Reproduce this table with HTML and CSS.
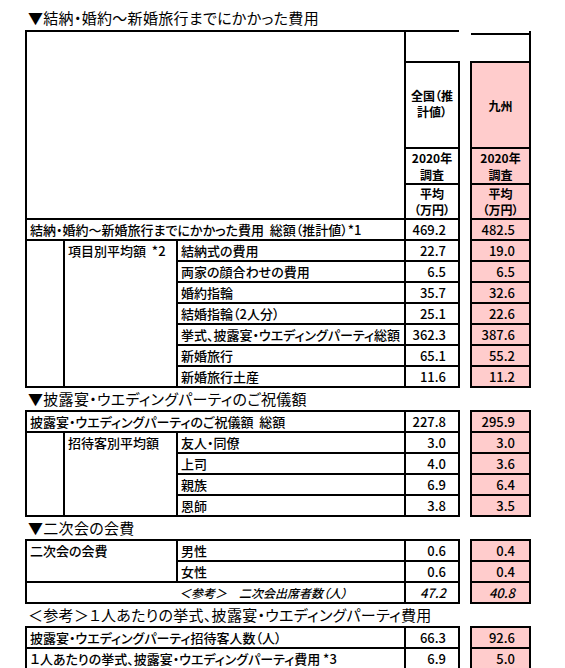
FILE: index.html
```html
<!DOCTYPE html>
<html lang="ja">
<head>
<meta charset="utf-8">
<title>費用</title>
<link rel="stylesheet" href="styles.css">
</head>
<body>
<div class="sheet">
  <h2 class="title first">▼結納・婚約～新婚旅行までにかかった費用</h2>
  <table class="grid">
    <colgroup><col class="c1"><col class="c2"><col class="c3"><col class="cn"><col class="cs"><col class="cp"></colgroup>
    <tr class="h1">
      <td colspan="3" rowspan="4" class="blank"></td>
      <td class="num-top"></td>
      <td rowspan="4" class="sp"></td>
      <td class="pink-top"><div class="cap"></div></td>
    </tr>
    <tr class="h2">
      <td class="hd nat">全国（推<br>計値）</td>
      <td class="hd pink kyu">九州</td>
    </tr>
    <tr class="h3">
      <td class="hd">2020年<br>調査</td>
      <td class="hd pink">2020年<br>調査</td>
    </tr>
    <tr class="h4">
      <td class="hd avg">平均<br>（万円）</td>
      <td class="hd avg pink">平均<br>（万円）</td>
    </tr>
    <tr class="r">
      <td colspan="3">結納・婚約～新婚旅行までにかかった費用&nbsp;&nbsp;総額（推計値）*1</td>
      <td class="n">469.2</td><td class="sp"></td><td class="n pink">482.5</td>
    </tr>
    <tr class="r">
      <td rowspan="7"></td>
      <td rowspan="7" class="top">項目別平均額&nbsp;&nbsp;*2</td>
      <td>結納式の費用</td>
      <td class="n">22.7</td><td class="sp"></td><td class="n pink">19.0</td>
    </tr>
    <tr class="r"><td>両家の顔合わせの費用</td><td class="n">6.5</td><td class="sp"></td><td class="n pink">6.5</td></tr>
    <tr class="r"><td>婚約指輪</td><td class="n">35.7</td><td class="sp"></td><td class="n pink">32.6</td></tr>
    <tr class="r"><td>結婚指輪（2人分）</td><td class="n">25.1</td><td class="sp"></td><td class="n pink">22.6</td></tr>
    <tr class="r"><td>挙式、披露宴・ウエディングパーティ総額</td><td class="n">362.3</td><td class="sp"></td><td class="n pink">387.6</td></tr>
    <tr class="r"><td>新婚旅行</td><td class="n">65.1</td><td class="sp"></td><td class="n pink">55.2</td></tr>
    <tr class="r"><td>新婚旅行土産</td><td class="n">11.6</td><td class="sp"></td><td class="n pink">11.2</td></tr>
  </table>

  <h2 class="title">▼披露宴・ウエディングパーティのご祝儀額</h2>
  <table class="grid">
    <colgroup><col class="c1"><col class="c2"><col class="c3"><col class="cn"><col class="cs"><col class="cp"></colgroup>
    <tr class="r">
      <td colspan="3">披露宴・ウエディングパーティのご祝儀額&nbsp;&nbsp;総額</td>
      <td class="n">227.8</td><td class="sp"></td><td class="n pink">295.9</td>
    </tr>
    <tr class="r">
      <td rowspan="4"></td>
      <td rowspan="4" class="top">招待客別平均額</td>
      <td>友人・同僚</td>
      <td class="n">3.0</td><td class="sp"></td><td class="n pink">3.0</td>
    </tr>
    <tr class="r"><td>上司</td><td class="n">4.0</td><td class="sp"></td><td class="n pink">3.6</td></tr>
    <tr class="r"><td>親族</td><td class="n">6.9</td><td class="sp"></td><td class="n pink">6.4</td></tr>
    <tr class="r"><td>恩師</td><td class="n">3.8</td><td class="sp"></td><td class="n pink">3.5</td></tr>
  </table>

  <h2 class="title">▼二次会の会費</h2>
  <table class="grid">
    <colgroup><col class="c1"><col class="c2"><col class="c3"><col class="cn"><col class="cs"><col class="cp"></colgroup>
    <tr class="r">
      <td colspan="2" rowspan="2" class="top">二次会の会費</td>
      <td>男性</td>
      <td class="n">0.6</td><td class="sp"></td><td class="n pink">0.4</td>
    </tr>
    <tr class="r"><td>女性</td><td class="n">0.6</td><td class="sp"></td><td class="n pink">0.4</td></tr>
    <tr class="r">
      <td colspan="3" class="ref">＜参考＞　二次会出席者数（人）</td>
      <td class="n it">47.2</td><td class="sp"></td><td class="n pink it">40.8</td>
    </tr>
  </table>

  <h2 class="title">＜参考＞１人あたりの挙式、披露宴・ウエディングパーティ費用</h2>
  <table class="grid">
    <colgroup><col class="c1"><col class="c2"><col class="c3"><col class="cn"><col class="cs"><col class="cp"></colgroup>
    <tr class="r">
      <td colspan="3">披露宴・ウエディングパーティ招待客人数（人）</td>
      <td class="n">66.3</td><td class="sp"></td><td class="n pink">92.6</td>
    </tr>
    <tr class="r">
      <td colspan="3">１人あたりの挙式、披露宴・ウエディングパーティ費用 *3</td>
      <td class="n">6.9</td><td class="sp"></td><td class="n pink">5.0</td>
    </tr>
  </table>
</div>
</body>
</html>
```

FILE: styles.css
```css
* { box-sizing: border-box; }
html, body { margin: 0; padding: 0; background: #fff; }
body {
  font-family: "Noto Sans CJK JP", "Noto Sans", sans-serif;
  color: #000;
  font-weight: 500;
  font-feature-settings: "palt";
}
.sheet { padding-left: 25px; width: 565px; }
.title {
  margin: 0;
  font-size: 15px;
  font-weight: 400;
  letter-spacing: 0.3px;
  height: 22px;
  line-height: 22px;
  padding-left: 3px;
  white-space: nowrap;
}
.title.first { height: 30px; line-height: 24px; padding-top: 6px; }

.grid {
  border-collapse: collapse;
  table-layout: fixed;
  width: 505px;
  font-size: 13px;
}
col.c1 { width: 38px; }
col.c2 { width: 113px; }
col.c3 { width: 228px; }
col.cn { width: 54px; }
col.cs { width: 12px; }
col.cp { width: 59px; }

.grid td {
  border: 2px solid #000;
  padding: 0 3px;
  vertical-align: middle;
  white-space: nowrap;
  line-height: 16px;
  overflow: hidden;
}
.grid td.sp { border: none; padding: 0; }
.grid tr.r { height: 21px; }
.grid tr.h1 { height: 31px; }
.grid tr.h2 { height: 86px; }
.grid tr.h3 { height: 35px; }
.grid tr.h4 { height: 34px; }

.grid td.num-top { border-right: none; }
.grid td.pink-top {
  border-left: none;
  border-top: none;
  background: #fff;
  vertical-align: top;
  padding: 0;
}
.cap { margin-top: 2px; border-top: 2px solid #000; }
.grid td.hd {
  text-align: center;
  font-size: 12px;
  font-weight: 700;
  line-height: 17px;
  padding: 0;
}
.grid td.nat { line-height: 16px; padding-bottom: 2px; }
.grid td.avg { vertical-align: top; line-height: 16px; padding-top: 1px; }
.grid td.top { vertical-align: top; padding-top: 2px; }
.grid td.n { text-align: right; padding-right: 12px; }
.grid td.pink { background: #ffcccc; }
.grid td.n.pink { padding-right: 14px; }
.grid td.it, .grid td.ref { font-style: italic; }
.grid td.ref { padding-left: 152px; font-size: 12px; }
```
